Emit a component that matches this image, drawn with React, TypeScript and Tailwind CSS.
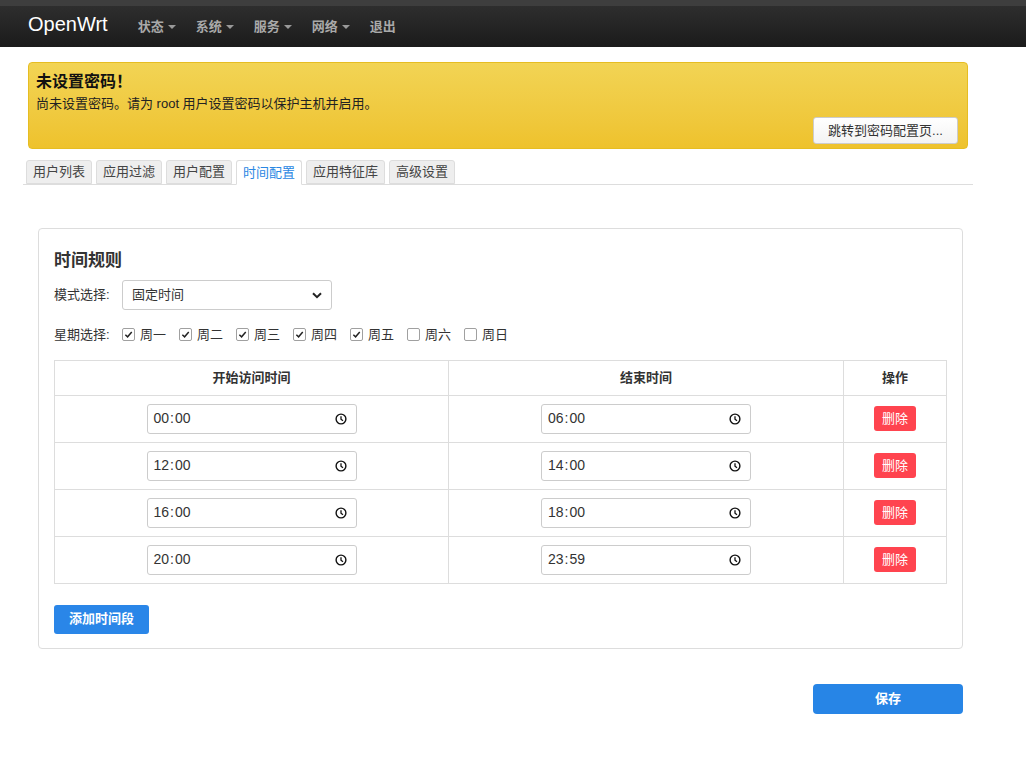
import React from "react";

const font = { fontFamily: '"Liberation Sans", "Noto Sans CJK SC", sans-serif' };

function Check({ checked, label }: { checked: boolean; label: string }) {
  return (
    <label className="flex items-center gap-[5px] mr-[13px]">
      <span className="w-[13px] h-[13px] border border-[#a0a0a0] rounded-[2px] bg-white flex items-center justify-center">
        {checked && (
          <svg width="9" height="9" viewBox="0 0 10 10">
            <path d="M1.5 5.2 L4 7.6 L8.6 2.2" stroke="#222" strokeWidth="1.6" fill="none" />
          </svg>
        )}
      </span>
      <span>{label}</span>
    </label>
  );
}

function TimeInput({ v }: { v: string }) {
  const [h, m] = v.split(":");
  return (
    <div className="inline-flex w-[210px] h-[30px] border border-[#ccc] rounded-[3px] pl-[6px] pr-[9px] items-center justify-between bg-white text-[14px] text-[#333] align-middle">
      <span className="flex items-center">
        <span>{h}</span>
        <span className="mx-[1px]">:</span>
        <span>{m}</span>
      </span>
      <svg width="12" height="12" viewBox="0 0 12 12">
        <circle cx="6" cy="6" r="4.9" stroke="#111" strokeWidth="1.4" fill="none" />
        <path d="M6 3.2 V6.2 L8 7.8" stroke="#111" strokeWidth="1.3" fill="none" />
      </svg>
    </div>
  );
}

export default function App() {
  const rows = [
    ["00:00", "06:00"],
    ["12:00", "14:00"],
    ["16:00", "18:00"],
    ["20:00", "23:59"],
  ];
  const days: [string, boolean][] = [
    ["周一", true],
    ["周二", true],
    ["周三", true],
    ["周四", true],
    ["周五", true],
    ["周六", false],
    ["周日", false],
  ];
  const tabs = ["用户列表", "应用过滤", "用户配置", "时间配置", "应用特征库", "高级设置"];
  return (
    <div className="w-[1026px] min-h-[762px] bg-white text-[13px] text-[#333]" style={font}>
      <div className="h-[47px] bg-gradient-to-b from-[#2e2e2e] to-[#1b1b1b] border-t-[6px] border-[#3e3e3e] flex items-center">
        <div className="ml-[28px] text-[20px] text-white -mt-[6px] leading-none">OpenWrt</div>
        <div className="flex items-center ml-[30px] font-bold text-[#a9a9a9]">
          {["状态", "系统", "服务", "网络"].map((t) => (
            <div key={t} className="flex items-center mr-[20px]">
              <span>{t}</span>
              <span className="ml-[4px] w-0 h-0 border-l-[4px] border-r-[4px] border-t-[4px] border-l-transparent border-r-transparent border-t-[#999]" />
            </div>
          ))}
          <span>退出</span>
        </div>
      </div>

      <div className="mx-[28px] mt-[15px] w-[940px] h-[87px] rounded-[4px] border border-[#e6bd22] bg-gradient-to-b from-[#f2d454] to-[#eec22c] px-[7px] pt-[9px] flex flex-col relative">
        <div className="text-[16px] font-bold text-[#111] leading-[20px]">未设置密码！</div>
        <div className="text-[13px] text-[#222] mt-[2px]">尚未设置密码。请为 root 用户设置密码以保护主机并启用。</div>
        <div className="absolute right-[9px] bottom-[4px] w-[145px] h-[27px] rounded-[3px] bg-gradient-to-b from-white to-[#f3f3f3] border border-[#ccc] flex items-center justify-center text-[13px] text-[#333]">
          跳转到密码配置页...
        </div>
      </div>

      <div className="mx-[23px] w-[950px] mt-[11px] border-b border-[#ddd] flex items-end pl-[3px] gap-[4px] h-[25px]">
        {tabs.map((t, i) => (
          <div
            key={t}
            className={
              i === 3
                ? "h-[25px] px-[6px] bg-white border border-[#ddd] border-b-white -mb-px rounded-t-[3px] flex items-center text-[#2a87e3]"
                : "h-[24px] px-[6px] bg-[#eee] border border-[#ddd] rounded-t-[3px] flex items-center text-[#444]"
            }
          >
            {t}
          </div>
        ))}
      </div>

      <div className="mx-[38px] mt-[43px] w-[925px] h-[421px] border border-[#ddd] rounded-[4px] px-[15px] pt-[20px]">
        <div className="text-[17px] font-bold text-[#333] leading-[24px]">时间规则</div>
        <div className="flex items-center mt-[7px]">
          <span className="w-[68px]">模式选择:</span>
          <div className="w-[210px] h-[30px] border border-[#ccc] rounded-[3px] flex items-center justify-between px-[9px]">
            <span>固定时间</span>
            <svg width="10" height="7" viewBox="0 0 10 7">
              <path d="M1 1.2 L5 5.2 L9 1.2" stroke="#222" strokeWidth="2" fill="none" />
            </svg>
          </div>
        </div>
        <div className="flex items-center mt-[15px]">
          <span className="w-[68px]">星期选择:</span>
          {days.map(([d, c]) => (
            <Check key={d} label={d} checked={c} />
          ))}
        </div>
        <table className="mt-[15px] w-[893px] border-collapse">
          <thead>
            <tr className="h-[35px]">
              <th className="border border-[#ddd] w-[394px] font-bold">开始访问时间</th>
              <th className="border border-[#ddd] w-[395px] font-bold">结束时间</th>
              <th className="border border-[#ddd] font-bold">操作</th>
            </tr>
          </thead>
          <tbody>
            {rows.map(([a, b]) => (
              <tr key={a} className="h-[47px]">
                <td className="border border-[#ddd] text-center">
                  <TimeInput v={a} />
                </td>
                <td className="border border-[#ddd] text-center">
                  <TimeInput v={b} />
                </td>
                <td className="border border-[#ddd] text-center">
                  <span className="inline-flex items-center justify-center w-[42px] h-[25px] rounded-[3px] bg-[#ff444f] text-white text-[13px] align-middle">删除</span>
                </td>
              </tr>
            ))}
          </tbody>
        </table>
        <div className="mt-[21px] w-[95px] h-[29px] rounded-[3px] bg-[#2a86e8] text-white flex items-center justify-center font-bold">添加时间段</div>
      </div>

      <div className="flex justify-end mt-[35px] mr-[63px]">
        <div className="w-[150px] h-[30px] rounded-[4px] bg-[#2785e6] text-white font-bold flex items-center justify-center">保存</div>
      </div>
    </div>
  );
}
